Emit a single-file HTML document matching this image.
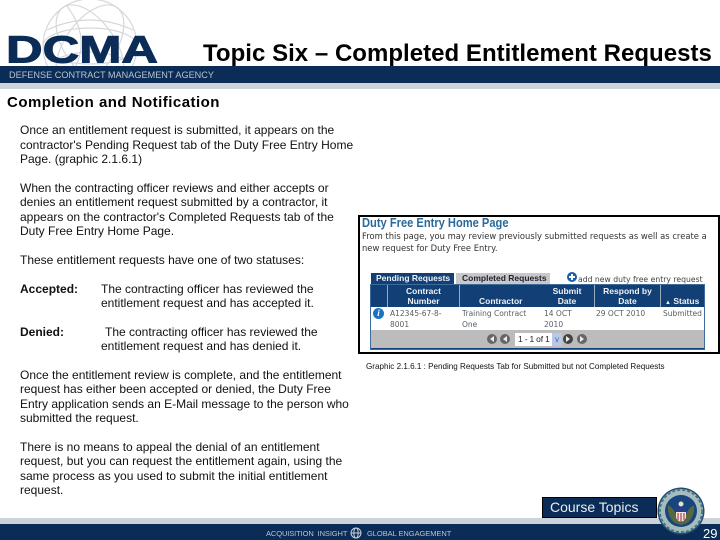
<!DOCTYPE html>
<html><head><meta charset="utf-8"><style>
html,body{margin:0;padding:0;background:#fff}
#p{position:relative;width:720px;height:540px;overflow:hidden;background:#fff;font-family:"Liberation Sans",sans-serif;color:#111}
.a{position:absolute}
.t{position:absolute;white-space:nowrap;font-size:12px;line-height:14px;left:20px}
.s{position:absolute;white-space:nowrap;font-family:"DejaVu Sans",sans-serif;font-size:7.5px;line-height:11px;color:#56606a}
.h{font-family:"Liberation Sans",sans-serif;font-size:8.5px;line-height:10px;color:#eef2f6;font-weight:bold}
.c{position:absolute;width:10px;height:10px;border-radius:50%;background:#666;top:334px}
</style></head><body><div id="p">
<svg class="a" style="left:0;top:0" width="240" height="66" viewBox="0 0 240 66">
<g fill="none" stroke="#d5d8da" stroke-width="1.2">
<circle cx="90" cy="46" r="47"/>
<ellipse cx="90" cy="46" rx="25" ry="47" transform="rotate(35 90 46)"/>
<ellipse cx="90" cy="46" rx="25" ry="47" transform="rotate(-35 90 46)"/>
<ellipse cx="90" cy="46" rx="47" ry="18"/>
<path d="M47 30Q90 10 133 30M50 62Q90 42 130 62M66 5Q90 35 76 66"/>
</g>
<text x="6" y="62.500" font-family="Liberation Sans" font-weight="bold" font-size="38" fill="#0a2c57" textLength="152" lengthAdjust="spacingAndGlyphs" stroke="#0a2c57" stroke-width="1">DCMA</text>
</svg>
<div class="a" style="left:0;top:66px;width:720px;height:17px;background:#0a2c57"></div>
<div class="a" style="left:0;top:83px;width:720px;height:6px;background:#ccd3da"></div>
<div class="a" style="left:0;top:518px;width:720px;height:6px;background:#ccd3da"></div>
<div class="a" style="left:0;top:524px;width:720px;height:16px;background:#0a2c57"></div>
<svg class="a" style="left:0;top:66px" width="240" height="17" viewBox="0 0 240 17">
<text x="9" y="12" font-family="Liberation Sans" font-size="9" fill="#b9c3cf" textLength="205" lengthAdjust="spacingAndGlyphs">DEFENSE CONTRACT MANAGEMENT AGENCY</text>
</svg>

<div class="a" style="left:203px;top:41px;font-size:24px;line-height:26px;font-weight:bold;color:#000;white-space:nowrap;letter-spacing:.03px">Topic Six – Completed Entitlement Requests</div>
<div class="a" style="left:7px;top:94px;font-size:15px;line-height:18px;font-weight:bold;color:#000;white-space:nowrap;letter-spacing:.48px">Completion and Notification</div>

<div class="t" style="top:123px">Once an entitlement request is submitted, it appears on the</div>
<div class="t" style="top:138px">contractor's Pending Request tab of the Duty Free Entry Home</div>
<div class="t" style="top:152px">Page. (graphic 2.1.6.1)</div>
<div class="t" style="top:181px">When the contracting officer reviews and either accepts or</div>
<div class="t" style="top:195px">denies an entitlement request submitted by a contractor, it</div>
<div class="t" style="top:210px">appears on the contractor's Completed Requests tab of the</div>
<div class="t" style="top:224px">Duty Free Entry Home Page.</div>
<div class="t" style="top:253px">These entitlement requests have one of two statuses:</div>
<div class="t" style="top:282px"><b>Accepted:</b></div>
<div class="t" style="top:282px;left:101px">The contracting officer has reviewed the</div>
<div class="t" style="top:296px;left:101px">entitlement request and has accepted it.</div>
<div class="t" style="top:325px"><b>Denied:</b></div>
<div class="t" style="top:325px;left:105px">The contracting officer has reviewed the</div>
<div class="t" style="top:339px;left:101px">entitlement request and has denied it.</div>
<div class="t" style="top:368px">Once the entitlement review is complete, and the entitlement</div>
<div class="t" style="top:382px">request has either been accepted or denied, the Duty Free</div>
<div class="t" style="top:397px">Entry application sends an E-Mail message to the person who</div>
<div class="t" style="top:411px">submitted the request.</div>
<div class="t" style="top:440px">There is no means to appeal the denial of an entitlement</div>
<div class="t" style="top:454px">request, but you can request the entitlement again, using the</div>
<div class="t" style="top:469px">same process as you used to submit the initial entitlement</div>
<div class="t" style="top:483px">request.</div>

<!-- graphic -->
<div class="a" style="left:358px;top:215px;width:362px;height:139px;box-sizing:border-box;border:2px solid #000;background:#fff"></div>
<div class="a" style="left:362px;top:216px;font-size:12.5px;line-height:14px;font-weight:bold;color:#2a6a9a;white-space:nowrap;transform:scaleX(.89);transform-origin:0 0">Duty Free Entry Home Page</div>
<div class="s" style="left:362px;top:230px;font-size:8.4px;line-height:12px;color:#333">From this page, you may review previously submitted requests as well as create a</div>
<div class="s" style="left:362px;top:242px;font-size:8.4px;line-height:12px;color:#333">new request for Duty Free Entry.</div>

<div class="a" style="left:371px;top:273px;width:83px;height:11px;background:#123f75"></div>
<div class="s h" style="left:376px;top:273px;line-height:11px">Pending Requests</div>
<div class="a" style="left:456px;top:273px;width:94px;height:11px;background:#c8c8c8"></div>
<div class="s h" style="left:462px;top:273px;line-height:11px;color:#223">Completed Requests</div>
<div class="a" style="left:567px;top:272px;width:10px;height:10px;border-radius:5px;background:#1a5fa8"></div>
<div class="a" style="left:571px;top:274px;width:2px;height:6px;background:#fff"></div>
<div class="a" style="left:569px;top:276px;width:6px;height:2px;background:#fff"></div>
<div class="s" style="left:578px;top:274px;font-size:7.7px;line-height:11px;color:#444">add new duty free entry request</div>

<div class="a" style="left:370px;top:284px;width:335px;height:66px;box-sizing:border-box;border:1px solid #3c6b9c;background:#123f75"></div>
<div class="a" style="left:371px;top:307px;width:333px;height:23px;background:#fff"></div>
<div class="a" style="left:371px;top:330px;width:333px;height:18px;background:#bcbcbc"></div>
<div class="a" style="left:387px;top:285px;width:1px;height:22px;background:#9ab"></div>
<div class="a" style="left:459px;top:285px;width:1px;height:22px;background:#9ab"></div>
<div class="a" style="left:594px;top:285px;width:1px;height:22px;background:#9ab"></div>
<div class="a" style="left:660px;top:285px;width:1px;height:22px;background:#9ab"></div>

<div class="s h" style="left:388px;top:286px;width:71px;text-align:center">Contract<br>Number</div>
<div class="s h" style="left:479px;top:296px">Contractor</div>
<div class="s h" style="left:540px;top:286px;width:54px;text-align:center">Submit<br>Date</div>
<div class="s h" style="left:595px;top:286px;width:65px;text-align:center">Respond by<br>Date</div>
<div class="s h" style="left:665px;top:296px"><span style="font-size:6px">▲</span> Status</div>

<div class="a" style="left:373px;top:308px;width:11px;height:11px;border-radius:50%;background:#1a72c0"></div>
<div class="a" style="left:373px;top:308px;width:11px;height:11px;font:italic bold 9px/11px 'Liberation Serif',serif;color:#fff;text-align:center">i</div>
<div class="s" style="left:390px;top:308px">A12345-67-8-<br>8001</div>
<div class="s" style="left:462px;top:308px">Training Contract<br>One</div>
<div class="s" style="left:544px;top:308px">14 OCT<br>2010</div>
<div class="s" style="left:596px;top:308px">29 OCT 2010</div>
<div class="s" style="left:663px;top:308px">Submitted</div>

<div class="c" style="left:487px"></div>
<div class="c" style="left:500px"></div>
<div class="c" style="left:563px;background:#444"></div>
<div class="c" style="left:577px"></div>
<svg class="a" style="left:487px;top:334px" width="100" height="10" viewBox="0 0 100 10" fill="#eee"><path d="M7 2L3 5L7 8ZM20 2L16 5L20 8ZM79 2L83 5L79 8ZM93 2L97 5L93 8Z"/></svg>
<div class="a" style="left:515px;top:333px;width:47px;height:13px;background:#fff"></div>
<div class="a" style="left:552px;top:333px;width:10px;height:13px;background:#b8c8e8;color:#46a;font-size:8px;line-height:13px;text-align:center">v</div>
<div class="a" style="left:518px;top:333px;font-size:8.5px;line-height:13px;white-space:nowrap;color:#222;letter-spacing:-.2px">1 - 1 of 1</div>

<div class="a" style="left:366px;top:361px;height:12px;font-size:8.1px;line-height:12px;white-space:nowrap;color:#111">Graphic  2.1.6.1 : Pending Requests Tab for Submitted but not Completed Requests</div>

<!-- footer -->
<div class="a" style="left:542px;top:497px;width:115px;height:21px;box-sizing:border-box;background:#0a2c57;border:1px solid #000;color:#e8edf2;font-size:14px;line-height:19px;padding-left:7px;white-space:nowrap">Course Topics</div>
<svg class="a" style="left:656px;top:486px" width="50" height="50" viewBox="0 0 50 50">
<circle cx="25" cy="25" r="23.500" fill="#1f4f70"/>
<circle cx="25" cy="25" r="22" fill="#a6bcbc"/>
<circle cx="25" cy="25" r="21" fill="none" stroke="#3f6b84" stroke-dasharray="3 2" stroke-width="1.500"/>
<circle cx="25" cy="25" r="16" fill="#17457e"/>
<path d="M12 19Q19 23 21 32L25 37L29 32Q31 23 38 19Q39 31 31 37L25 39L19 37Q11 31 12 19Z" fill="#57683f"/>
<path d="M20 23H30V31Q30 34 25 36Q20 34 20 31Z" fill="#f1e7e3"/>
<path d="M22 27V34M25 27V36M28 27V34" stroke="#b03040" stroke-width="1.100"/>
<rect x="20" y="22" width="10" height="4" fill="#2a3f8a"/>
<circle cx="25" cy="18" r="2.500" fill="#e8e0c8"/>
</svg>
<div class="a" style="left:703px;top:526px;font-size:13px;line-height:15px;color:#fff">29</div>
<div class="a" style="left:266px;top:529px;font-size:7.500px;line-height:10px;color:#b9c3cf;white-space:nowrap;letter-spacing:-.1px">ACQUISITION&nbsp; INSIGHT</div>
<svg class="a" style="left:350px;top:527px" width="12" height="12" viewBox="0 0 12 12"><g fill="none" stroke="#c9d2dc"><circle cx="6" cy="6" r="5"/><ellipse cx="6" cy="6" rx="2.200" ry="5"/><path d="M1 6H11"/></g></svg>
<div class="a" style="left:367px;top:529px;font-size:7.500px;line-height:10px;color:#b9c3cf;white-space:nowrap;letter-spacing:-.05px">GLOBAL ENGAGEMENT</div>
</div></body></html>
